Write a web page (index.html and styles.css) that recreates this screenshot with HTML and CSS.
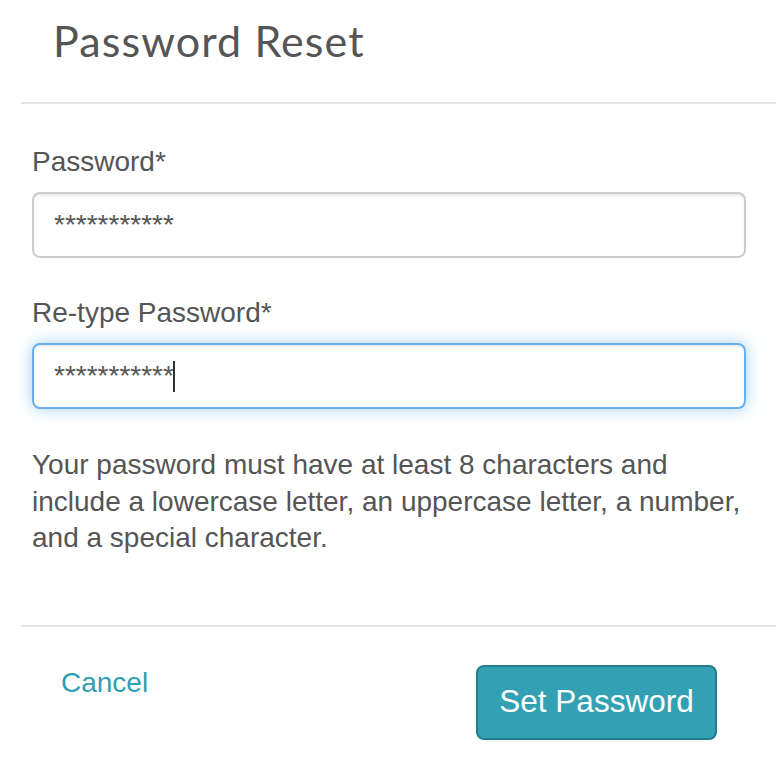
FILE: index.html
```html
<!DOCTYPE html>
<html lang="en">
<head>
<meta charset="utf-8">
<title>Password Reset</title>
<link rel="stylesheet" href="styles.css">
</head>
<body>
<div class="modal">
  <div class="modal-header">
    <h1 class="modal-title">Password Reset</h1>
  </div>
  <div class="modal-body">
    <div class="form-group">
      <label class="control-label">Password*</label>
      <div class="form-control" role="textbox">***********</div>
    </div>
    <div class="form-group">
      <label class="control-label">Re-type Password*</label>
      <div class="form-control focused" role="textbox">***********<span class="caret"></span></div>
    </div>
    <p class="help-text">Your password must have at least 8 characters and include a lowercase letter, an uppercase letter, a number, and a special character.</p>
  </div>
  <div class="modal-footer">
    <a class="cancel-link" href="#">Cancel</a>
    <button class="btn-primary" type="button">Set Password</button>
  </div>
</div>
</body>
</html>
```

FILE: styles.css
```css
html, body {
  margin: 0;
  padding: 0;
  background: #ffffff;
}

body {
  font-family: "Liberation Sans", Arial, sans-serif;
  color: #555555;
}

.modal {
  padding-left: 21px;
}

.modal-header {
  border-bottom: 2px solid #e5e5e5;
  padding: 15px 0 0 32px;
  height: 87px;
}

.modal-title {
  margin: 0;
  font-family: Lato, "Liberation Sans", sans-serif;
  font-weight: 400;
  font-size: 43px;
  letter-spacing: 1.1px;
  line-height: 1.2;
  color: #555555;
}

.modal-body {
  padding: 40px 30px 0 11px;
  border-bottom: 2px solid #e5e5e5;
}

.form-group {
  display: flex;
  flex-direction: column;
  margin-bottom: 37px;
}

.control-label {
  font-size: 28px;
  line-height: 36px;
  margin-bottom: 12px;
  color: #555555;
}

.form-control {
  box-sizing: border-box;
  height: 66px;
  border: 2px solid #cccccc;
  border-radius: 8px;
  padding: 0 20px;
  display: flex;
  align-items: center;
  font-size: 28px;
  color: #555555;
  box-shadow: inset 0 2px 2px rgba(0, 0, 0, 0.075);
}

.form-control.focused {
  border-color: #66afe9;
  box-shadow: inset 0 2px 2px rgba(0, 0, 0, 0.075), 0 0 16px rgba(102, 175, 233, 0.6);
}

.caret {
  display: inline-block;
  width: 2px;
  height: 31px;
  background: #333333;
  margin-left: -1px;
}

.help-text {
  margin: 0;
  padding-top: 1px;
  padding-bottom: 68px;
  font-size: 28px;
  line-height: 36.5px;
  color: #555555;
}

.modal-footer {
  display: flex;
  justify-content: space-between;
  align-items: flex-start;
  padding: 38px 59px 0 40px;
}

.cancel-link {
  font-size: 28px;
  line-height: 36px;
  color: #2f9fb3;
  text-decoration: none;
}

.btn-primary {
  box-sizing: border-box;
  width: 241px;
  height: 75px;
  padding: 0;
  border: 2px solid #237f8d;
  border-radius: 8px;
  background: #33a1b3;
  color: #ffffff;
  font-family: "Liberation Sans", Arial, sans-serif;
  font-size: 31.5px;
  line-height: 1;
}
```
